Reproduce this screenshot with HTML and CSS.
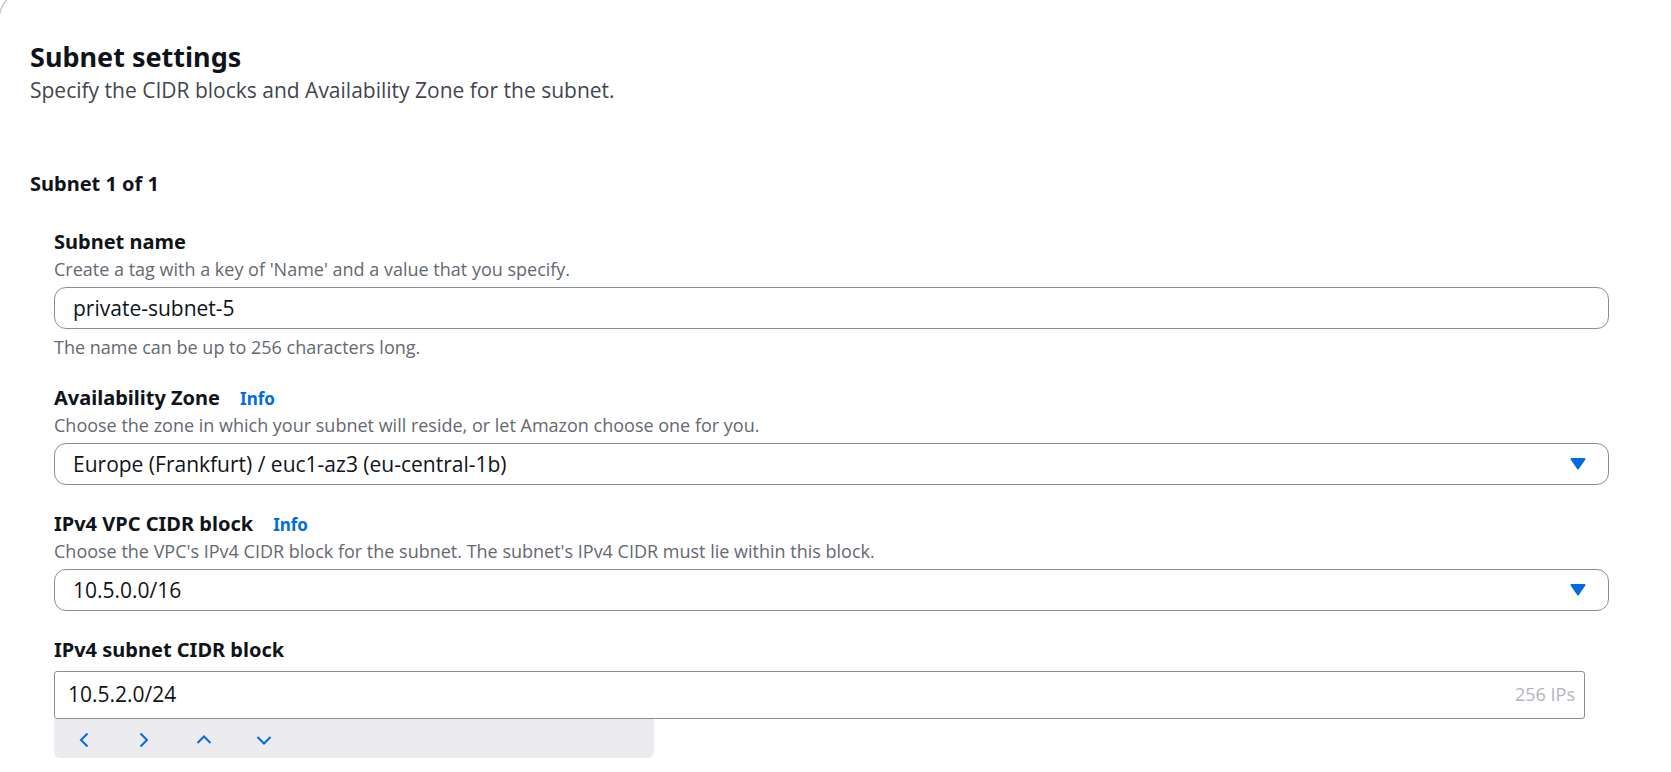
FILE: index.html
```html
<!DOCTYPE html>
<html lang="en">
<head>
<meta charset="utf-8">
<title>Subnet settings</title>
<link rel="stylesheet" href="styles.css">
</head>
<body>
<main class="panel">
  <header class="panel-header">
    <h2 class="panel-title">Subnet settings</h2>
    <p class="panel-description">Specify the CIDR blocks and Availability Zone for the subnet.</p>
  </header>
  <section class="subnet">
    <h3 class="subnet-title">Subnet 1 of 1</h3>
    <form class="fields">
      <div class="field">
        <div class="field-heading"><label class="label" for="subnet-name">Subnet name</label></div>
        <p class="hint">Create a tag with a key of 'Name' and a value that you specify.</p>
        <input class="control" id="subnet-name" type="text" value="private-subnet-5">
        <p class="constraint">The name can be up to 256 characters long.</p>
      </div>
      <div class="field">
        <div class="field-heading"><label class="label" for="zone">Availability Zone</label><a class="info" href="#zone">Info</a></div>
        <p class="hint">Choose the zone in which your subnet will reside, or let Amazon choose one for you.</p>
        <div class="select-wrap">
          <select class="control" id="zone"><option>Europe (Frankfurt) / euc1-az3 (eu-central-1b)</option></select>
          <svg class="caret" viewBox="0 0 16 12" aria-hidden="true"><path d="M1.5 1h13L8 10.5z"/></svg>
        </div>
      </div>
      <div class="field">
        <div class="field-heading"><label class="label" for="vpc-cidr">IPv4 VPC CIDR block</label><a class="info" href="#vpc-cidr">Info</a></div>
        <p class="hint">Choose the VPC's IPv4 CIDR block for the subnet. The subnet's IPv4 CIDR must lie within this block.</p>
        <div class="select-wrap">
          <select class="control" id="vpc-cidr"><option>10.5.0.0/16</option></select>
          <svg class="caret" viewBox="0 0 16 12" aria-hidden="true"><path d="M1.5 1h13L8 10.5z"/></svg>
        </div>
      </div>
      <div class="field">
        <div class="field-heading"><label class="label" for="subnet-cidr">IPv4 subnet CIDR block</label></div>
        <div class="cidr-box">
          <input class="cidr-input" id="subnet-cidr" type="text" value="10.5.2.0/24">
          <span class="cidr-count">256 IPs</span>
        </div>
        <div class="stepper">
          <button class="step" type="button" aria-label="Previous octet"><svg viewBox="0 0 18 18"><path d="M12.5 2.5 6 9l6.5 6.5"/></svg></button>
          <button class="step" type="button" aria-label="Next octet"><svg viewBox="0 0 18 18"><path d="M5.5 2.5 12 9l-6.5 6.5"/></svg></button>
          <button class="step" type="button" aria-label="Increase"><svg viewBox="0 0 18 18"><path d="M2.5 12 9 5.5l6.5 6.5"/></svg></button>
          <button class="step" type="button" aria-label="Decrease"><svg viewBox="0 0 18 18"><path d="M2.5 6 9 12.5 15.5 6"/></svg></button>
        </div>
      </div>
    </form>
  </section>
</main>
</body>
</html>
```
FILE: styles.css
```css
* { box-sizing: border-box; }

body {
  margin: 0;
  overflow-x: hidden;
  background: #fff;
  color: #0f141a;
  font: 21px/30px "Open Sans", "Noto Sans", sans-serif;
}

h2, h3, p { margin: 0; }

.panel {
  margin: -7px -32px 0 -1px;
  padding: 45px 93px 8px 30px;
  border: 1px solid #b4b4bb;
  border-bottom: 0;
  border-radius: 24px 24px 0 0;
}

.panel-title, .subnet-title, .label, .info {
  font-family: "Noto Sans", "Open Sans", sans-serif;
  font-weight: 700;
}

.panel-title { font-size: 27px; line-height: 36px; }
.panel-description { color: #424650; }

.subnet { margin-top: 64px; }
.subnet-title { font-size: 20px; }

.fields {
  display: flex;
  flex-direction: column;
  gap: 24px;
  margin-top: 28px;
  padding-left: 24px;
}

.field-heading { display: flex; align-items: baseline; gap: 20px; }
.label { font-size: 20px; }
.info {
  color: #006ce0;
  font-size: 17px;
  line-height: 24px;
  text-decoration: none;
}

.hint, .constraint { color: #656871; font-size: 18px; line-height: 24px; }
.constraint { margin-top: 6px; }

.control {
  display: block;
  width: 100%;
  height: 42px;
  margin: 6px 0 0;
  padding: 0 18px 1px;
  border: 1px solid #8c8c94;
  border-radius: 12px;
  background: #fff;
  color: inherit;
  font: inherit;
  appearance: none;
}

.select-wrap { position: relative; }
.caret {
  position: absolute;
  right: 23px;
  bottom: 15px;
  width: 16px;
  height: 12px;
  fill: #006ce0;
  stroke: #006ce0;
  stroke-width: 2;
  stroke-linejoin: round;
  pointer-events: none;
}

.cidr-box {
  display: flex;
  align-items: center;
  height: 48px;
  margin: 6px 24px 0 0;
  padding: 0 9px 2px 13px;
  border: 1px solid #8c8c94;
  border-radius: 3px;
}
.cidr-input {
  flex: 1;
  min-width: 0;
  padding: 0;
  border: 0;
  outline: 0;
  background: none;
  color: inherit;
  font: inherit;
}
.cidr-count { color: #b4b4bb; font-size: 18px; }

.stepper {
  display: flex;
  width: 600px;
  max-width: 100%;
  border-radius: 0 0 6px 6px;
  background: #ebebf0;
}
.step {
  display: grid;
  place-items: center;
  width: 60px;
  height: 39px;
  padding: 2px 0 0;
  border: 0;
  background: none;
}
.step svg {
  width: 18px;
  height: 18px;
  fill: none;
  stroke: #006ce0;
  stroke-width: 2;
}
```
